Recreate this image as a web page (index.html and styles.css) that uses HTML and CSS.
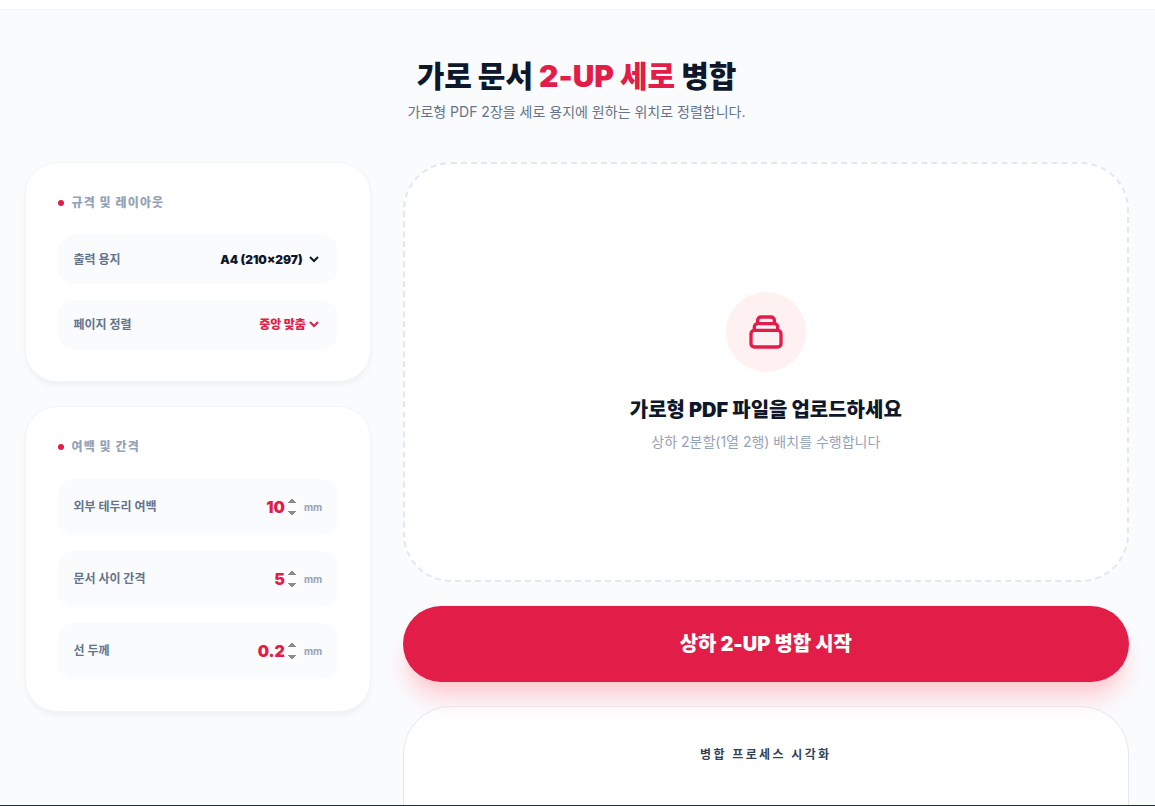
FILE: index.html
```html
<!DOCTYPE html>
<html lang="ko">
<head>
<meta charset="utf-8">
<meta name="viewport" content="width=device-width, initial-scale=1">
<title>가로 문서 2-UP 세로 병합</title>
<link rel="stylesheet" href="styles.css">
</head>
<body>
<header class="topbar"></header>
<main class="page">
  <div class="container">
    <div class="intro">
      <h1 class="intro-title">가로 문서 <span class="accent">2-UP 세로</span> 병합</h1>
      <p class="intro-text">가로형 PDF 2장을 세로 용지에 원하는 위치로 정렬합니다.</p>
    </div>
    <div class="layout">
      <div class="column">
        <section class="card">
          <h2 class="card-title">규격 및 레이아웃</h2>
          <div class="rows">
            <div class="row">
              <label class="row-label" for="paper">출력 용지</label>
              <select class="select" id="paper"><option>A4 (210×297)</option><option>A3 (297×420)</option></select>
            </div>
            <div class="row">
              <label class="row-label" for="align">페이지 정렬</label>
              <select class="select accent" id="align"><option>중앙 맞춤</option></select>
            </div>
          </div>
        </section>
        <section class="card">
          <h2 class="card-title">여백 및 간격</h2>
          <div class="rows">
            <div class="row">
              <label class="row-label" for="margin">외부 테두리 여백</label>
              <div class="measure"><input class="number" id="margin" type="number" value="10"><span class="unit">mm</span></div>
            </div>
            <div class="row">
              <label class="row-label" for="gap">문서 사이 간격</label>
              <div class="measure"><input class="number" id="gap" type="number" value="5"><span class="unit">mm</span></div>
            </div>
            <div class="row">
              <label class="row-label" for="line">선 두께</label>
              <div class="measure"><input class="number" id="line" type="number" step="0.1" value="0.2"><span class="unit">mm</span></div>
            </div>
          </div>
        </section>
      </div>
      <div class="column">
        <section class="dropzone">
          <div class="drop-icon">
            <svg width="40" height="40" viewBox="0 0 24 24" fill="none" stroke="currentColor" stroke-width="2" stroke-linecap="round" stroke-linejoin="round" aria-hidden="true"><path d="M19 11H5m14 0a2 2 0 012 2v6a2 2 0 01-2 2H5a2 2 0 01-2-2v-6a2 2 0 012-2m14 0V9a2 2 0 00-2-2M5 11V9a2 2 0 012-2m0 0V5a2 2 0 012-2h6a2 2 0 012 2v2M7 7h10"/></svg>
          </div>
          <h2 class="drop-title">가로형 PDF 파일을 업로드하세요</h2>
          <p class="drop-text">상하 2분할(1열 2행) 배치를 수행합니다</p>
        </section>
        <button class="start" type="button">상하 2-UP 병합 시작</button>
        <section class="process">
          <h2 class="process-title">병합 프로세스 시각화</h2>
        </section>
      </div>
    </div>
  </div>
</main>
<footer class="bottombar"></footer>
</body>
</html>
```
FILE: styles.css
```css
* { box-sizing: border-box; }

body {
  margin: 0;
  height: 100vh;
  display: flex;
  flex-direction: column;
  background: #fafbfd;
  color: #0f172a;
  font-family: Inter, "Noto Sans CJK KR", sans-serif;
}

h1, h2, p { margin: 0; }

.topbar {
  flex: none;
  height: 10px;
  background: #fff;
  border-bottom: 1px solid #f1f5f9;
}

.page {
  flex: 1;
  min-height: 0;
  padding-right: 2px;
  overflow-y: auto;
  scrollbar-width: none;
}

.bottombar {
  flex: none;
  height: 1px;
  background: #1e293b;
}

.container {
  max-width: 1152px;
  margin: 0 auto;
  padding: 48px 24px;
}

.intro { margin-bottom: 40px; text-align: center; }

.intro-title {
  font-size: 30px;
  line-height: 36px;
  font-weight: 900;
}

.accent { color: #e11d48; }

.intro-text {
  margin-top: 8px;
  font-size: 14px;
  line-height: 20px;
  color: #64748b;
}

.layout {
  display: grid;
  grid-template-columns: repeat(12, minmax(0, 1fr));
  gap: 32px;
  align-items: start;
}

.column {
  grid-column: span 8;
  display: flex;
  flex-direction: column;
  gap: 24px;
}

.column:first-child { grid-column: span 4; }

.card {
  padding: 32px;
  background: #fff;
  border: 1px solid #f1f5f9;
  border-radius: 32px;
  box-shadow: 0 4px 6px -1px rgb(0 0 0 / 5%);
}

.card-title {
  display: flex;
  align-items: center;
  gap: 8px;
  margin-bottom: 24px;
  font-size: 12px;
  line-height: 16px;
  font-weight: 900;
  letter-spacing: 0.1em;
  color: #94a3b8;
}

.card-title::before {
  content: "";
  width: 6px;
  height: 6px;
  border-radius: 50%;
  background: #e11d48;
}

.rows { display: flex; flex-direction: column; gap: 16px; }

.row {
  display: flex;
  align-items: center;
  justify-content: space-between;
  padding: 16px;
  background: #fafbfc;
  border-radius: 16px;
}

.row-label {
  font-size: 12px;
  line-height: 16px;
  font-weight: 700;
  color: #64748b;
}

.select {
  height: 17px;
  padding: 0;
  border: 0;
  background: transparent;
  font: 900 12px/16px Inter, "Noto Sans CJK KR", sans-serif;
  color: #0f172a;
}

.select.accent { color: #e11d48; }

.measure { display: flex; align-items: center; gap: 4px; }

.number {
  width: 64px;
  height: 24px;
  padding: 0;
  border: 0;
  background: transparent;
  text-align: right;
  font: 900 16px/24px Inter, "Noto Sans CJK KR", sans-serif;
  color: #e11d48;
}

.number::-webkit-inner-spin-button { opacity: 1; }

.unit {
  font-size: 10px;
  line-height: 16px;
  font-weight: 700;
  color: #94a3b8;
}

.dropzone {
  min-height: 420px;
  display: flex;
  flex-direction: column;
  align-items: center;
  justify-content: center;
  background: #fff;
  border: 2px dashed #e2e8f0;
  border-radius: 48px;
}

.drop-icon {
  width: 80px;
  height: 80px;
  display: grid;
  place-items: center;
  border-radius: 50%;
  background: #fff1f2;
  color: #e11d48;
}

.drop-title {
  margin-top: 24px;
  font-size: 20px;
  line-height: 28px;
  font-weight: 900;
}

.drop-text {
  margin-top: 8px;
  font-size: 14px;
  line-height: 20px;
  color: #94a3b8;
}

.start {
  position: relative;
  padding: 24px;
  border: 0;
  border-radius: 40px;
  background: #e11d48;
  box-shadow: 0 20px 25px -5px #fecdd3, 0 8px 10px -6px #fecdd3;
  color: #fff;
  font: 900 20px/28px Inter, "Noto Sans CJK KR", sans-serif;
}

.process {
  min-height: 240px;
  padding: 40px;
  background: #fff;
  border: 1px solid #e2e8f0;
  border-radius: 48px;
}

.process-title {
  font-size: 12px;
  line-height: 16px;
  font-weight: 700;
  letter-spacing: 0.2em;
  text-align: center;
  color: #334155;
}
```
